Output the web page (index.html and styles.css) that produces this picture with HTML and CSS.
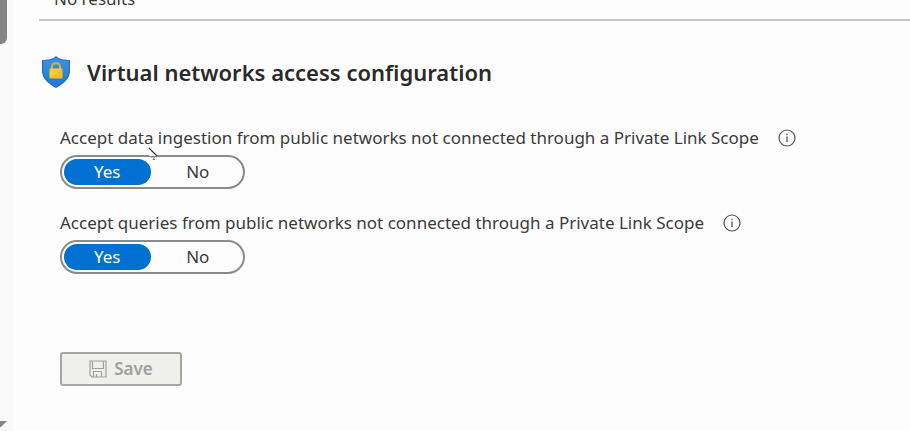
FILE: index.html
```html
<!DOCTYPE html>
<html lang="en">
<head>
<meta charset="utf-8">
<meta name="viewport" content="width=device-width, initial-scale=1">
<title>Virtual networks access configuration</title>
<link rel="stylesheet" href="styles.css">
</head>
<body>
<div class="page">
  <div class="scrollbar" aria-hidden="true">
    <span class="scrollbar-thumb"></span>
    <svg class="scrollbar-arrow" width="7" height="10" viewBox="0 0 7 10"><path d="M0 0H7L1 6H0Z" fill="#858585"/></svg>
  </div>
  <main class="content">
    <div class="results"><p class="results-text">No results</p></div>
    <header class="section-header">
      <svg class="shield" width="28" height="32" viewBox="0 0 28 32" aria-hidden="true">
        <defs>
          <linearGradient id="shield-fill" x1="0" y1="0" x2="0" y2="1"><stop offset="0" stop-color="#3f93e2"/><stop offset="1" stop-color="#1c78d4"/></linearGradient>
          <linearGradient id="lock-fill" x1="0" y1="0" x2="1" y2="1"><stop offset="0.5" stop-color="#fbd024"/><stop offset="0.5" stop-color="#f2bd25"/></linearGradient>
        </defs>
        <path d="M14 0C17 3 22 4 28 4V15C28 23 21 28 14 32C7 28 0 23 0 15V4C6 4 11 3 14 0Z" fill="#1b6fc2"/>
        <path d="M14 1C17 4 22 5 27 5V15C27 22 20 27 14 31C8 27 1 22 1 15V5C6 5 11 4 14 1Z" fill="url(#shield-fill)"/>
        <path d="M10 13V11C10 6 18 6 18 11V13" fill="none" stroke="#d5b24a" stroke-width="2"/>
        <rect x="7.500" y="12.500" width="13" height="10" rx="1" fill="url(#lock-fill)"/>
      </svg>
      <h1 class="title">Virtual networks access configuration</h1>
    </header>
    <form class="settings">
      <div class="setting" role="radiogroup" aria-labelledby="ingestion-label">
        <div class="setting-label">
          <span id="ingestion-label">Accept data ingestion from public networks not connected through a Private Link Scope</span>
          <button class="info" type="button" aria-label="About data ingestion">
            <svg width="18" height="18" viewBox="0 0 18 18"><circle cx="9" cy="9" r="8" fill="none" stroke="#555" stroke-width="1.200"/><path d="M9 7.500V13M9 4.800V6.200" stroke="#555" stroke-width="1.300"/></svg>
          </button>
        </div>
        <div class="toggle">
          <label class="option"><input type="radio" name="ingestion" value="yes" checked><span>Yes</span></label>
          <label class="option"><input type="radio" name="ingestion" value="no"><span>No</span></label>
        </div>
        <svg class="pointer" width="12" height="18" viewBox="0 0 12 18" aria-hidden="true"><path d="M1 5H6L8 8V9H1Z" fill="#fdfdfd"/><path d="M1 1L9 9" stroke="#333" stroke-width="1.100"/><path d="M3.500 11C5 8.500 7.500 10 5 12.500H7" fill="none" stroke="#777"/></svg>
      </div>
      <div class="setting" role="radiogroup" aria-labelledby="queries-label">
        <div class="setting-label">
          <span id="queries-label">Accept queries from public networks not connected through a Private Link Scope</span>
          <button class="info" type="button" aria-label="About queries">
            <svg width="18" height="18" viewBox="0 0 18 18"><circle cx="9" cy="9" r="8" fill="none" stroke="#555" stroke-width="1.200"/><path d="M9 7.500V13M9 4.800V6.200" stroke="#555" stroke-width="1.300"/></svg>
          </button>
        </div>
        <div class="toggle">
          <label class="option"><input type="radio" name="queries" value="yes" checked><span>Yes</span></label>
          <label class="option"><input type="radio" name="queries" value="no"><span>No</span></label>
        </div>
      </div>
      <button class="save" type="submit" disabled>
        <svg width="18" height="18" viewBox="0 0 18 18" fill="none" stroke="#a0a09e" stroke-width="1.200" aria-hidden="true"><path d="M1 1H17V17H3L1 15Z"/><path d="M3.500 1V8.500H14.500V1"/><path d="M4.500 17V11.500H12.500V17M7.500 17V14"/></svg>
        <span>Save</span>
      </button>
    </form>
  </main>
</div>
</body>
</html>
```
FILE: styles.css
```css
* { box-sizing: border-box; }

body {
  margin: 0;
  background: #fdfdfd;
  color: #3b3a39;
  font: 17px/24px "Noto Sans", "Open Sans", sans-serif;
}

.page { display: flex; min-height: 100vh; }

.scrollbar {
  display: flex;
  flex: none;
  flex-direction: column;
  justify-content: space-between;
  width: 13px;
  background: #f9f9f9;
}

.scrollbar-thumb {
  width: 7px;
  height: 44px;
  border-radius: 0 0 6px 0;
  background: #858585;
}

.scrollbar-arrow { display: block; }

.content { flex: 1; min-width: 0; padding-left: 26px; }

.results {
  display: flex;
  align-items: flex-end;
  height: 21px;
  padding: 0 15px 8px;
  overflow: hidden;
  border-bottom: 2px solid #c8c8c8;
}

.results-text { margin: 0; }

.section-header {
  display: flex;
  align-items: center;
  gap: 17px;
  padding: 35px 3px 0;
}

.shield { flex: none; }

.title {
  margin: 0;
  color: #2b2a29;
  font-size: 22px;
  font-weight: 600;
  line-height: 32px;
}

.settings { padding: 38px 21px 0; }

.setting { position: relative; margin-bottom: 22px; }

.setting-label {
  display: flex;
  align-items: center;
  gap: 19px;
  margin-bottom: 5px;
  white-space: nowrap;
}

.info { padding: 0; border: 0; background: none; }

.info svg { display: block; }

.toggle {
  display: inline-flex;
  gap: 4px;
  width: 185px;
  height: 34px;
  padding: 2px;
  border: 2px solid #8a8a8a;
  border-radius: 17px;
  vertical-align: top;
}

.option { position: relative; flex: 1; text-align: center; }

.option input { position: absolute; margin: 0; opacity: 0; }

.option span {
  display: block;
  border-radius: 13px;
  line-height: 26px;
}

.option input:checked + span { background: #0070d2; color: #fff; }

.pointer { position: absolute; top: 21px; left: 88px; }

.save {
  display: flex;
  align-items: center;
  justify-content: center;
  gap: 7px;
  width: 122px;
  height: 34px;
  margin-top: 78px;
  border: 2px solid #a6a6a4;
  border-radius: 3px;
  background: #f0f0ed;
  color: #a0a09e;
  font: 600 17px/24px "Noto Sans", "Open Sans", sans-serif;
}
```
